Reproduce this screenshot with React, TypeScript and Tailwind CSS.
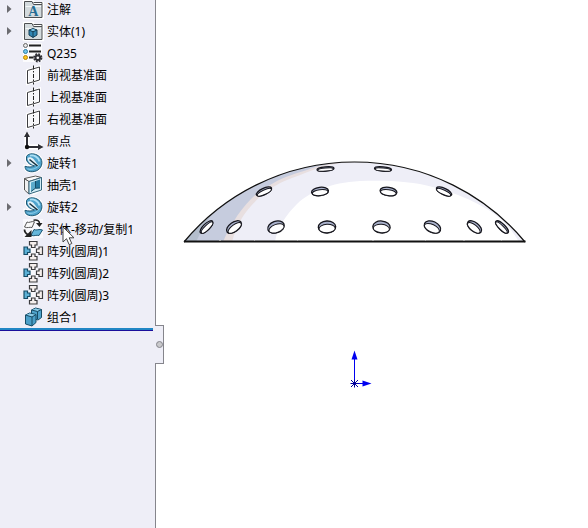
import type { ReactNode } from "react";

const INK = "#2f2f35";
const BLUE = "#4fa3cc";

function Icon({ children }: { children: ReactNode }) {
  return (
    <svg viewBox="0 0 22 22" className="size-[22px] shrink-0" fill="none" aria-hidden="true">
      {children}
    </svg>
  );
}

function FolderShape() {
  return (
    <>
      <path d="M2 3h9l1.500 2H21v15H2z" stroke="#fff" strokeWidth="2.500" />
      <path d="M2.500 19.500V3.500h7.500l1.500 3h8.500v13z" fill="#d3dadd" stroke="#4d4f52" />
      <path d="M11.500 4.500h8.500v2" stroke="#4d4f52" />
      <path d="M3.500 8.500h15.500" stroke="#f2f6f7" />
    </>
  );
}

function AnnotationIcon() {
  return (
    <Icon>
      <FolderShape />
      <text x="11.300" y="18" textAnchor="middle" fontSize="14" fontWeight="bold" fontFamily="Liberation Serif, serif" fill="#256d94">
        A
      </text>
    </Icon>
  );
}

function BodiesIcon() {
  return (
    <Icon>
      <FolderShape />
      <path d="M11 8.500l4 1.500v5l-4 2.500-4-2.500v-5z" fill="#2f86b3" stroke="#173e55" />
      <path d="M7 10l4 1.800 4-1.800M11 11.800v5.500" stroke="#173e55" />
      <path d="M8.500 10l2.500-.9 2.500.9-2.500 1z" fill="#8fd0ee" />
    </Icon>
  );
}

function MaterialIcon() {
  return (
    <Icon>
      <path d="M1 1h19v19H1z" fill="#fff" opacity=".75" />
      <path d="M7 3.500H19M7 9.500H19M7 15.500h4.500" stroke="#222" strokeWidth="2" />
      <circle cx="3.500" cy="3.500" r="2" fill="#e8e8e8" stroke="#666" />
      <circle cx="3.500" cy="9.500" r="2" fill="#6fc4ea" stroke="#2c7da3" />
      <circle cx="3.500" cy="15.500" r="2" fill="#ffc61a" stroke="#b8860b" />
      <circle cx="15.800" cy="15.800" r="3.600" stroke={INK} strokeWidth="2" strokeDasharray="1.700 1.130" />
      <circle cx="15.800" cy="15.800" r="2.300" stroke={INK} strokeWidth="2" />
    </Icon>
  );
}

function PlaneIcon() {
  return (
    <Icon>
      <path d="M5.500 6.500l12-3.500v13l-12 3.500z" fill="#f7f7fa" stroke="#fff" strokeWidth="3" />
      <path d="M5.500 6.500l12-3.500v13l-12 3.500z" stroke="#3b3b3f" />
      <path d="M11.500 1.500v19" stroke="#222" strokeDasharray="4 1.500 1.500 1.500" />
    </Icon>
  );
}

function OriginIcon() {
  return (
    <Icon>
      <path d="M5 3v14h15" stroke="#fff" strokeWidth="5" />
      <path d="M5 5v12h12" stroke={INK} strokeWidth="2" />
      <path d="M5 1.500l3 5.500h-6zM21.500 17l-5.500 3v-6z" fill={INK} />
      <circle cx="5" cy="17" r="2.200" fill="#111" />
    </Icon>
  );
}

function RevolveIcon() {
  const body =
    "M4.500 4.500C6 1.500 11 1 15 3 20 5.500 21.200 11 18.500 15.500 16 19.500 9 21.200 4.500 18.300 3.500 17.300 3 15.800 3 14.300 6 15.200 10 15.500 12.500 13.800 9 13 5.500 11.500 4.500 8z";
  return (
    <Icon>
      <path d={body} stroke="#fff" strokeWidth="3" />
      <path d={body} fill={BLUE} stroke="#1d5673" />
      <path d="M8 3.700c4-1 8.500 1.500 9.500 5.800" stroke="#a9def4" strokeWidth="1.800" />
      <path d="M5.500 16.800c4 1.300 9 0 12-4.300" stroke="#8bcbe6" strokeWidth="1.200" />
      <path d="M5.500 6c1.500-1.200 4-1 6 1l5 6.500-4-.2C9 12.500 6 10.500 5.500 6z" fill="#e4f2f9" />
      <path d="M7.500 7.500l8 6.500" stroke="#17333f" strokeWidth="1.600" />
    </Icon>
  );
}

function ShellIcon() {
  return (
    <Icon>
      <path d="M2.500 5l10-3 7 1.500V16l-8 4-9-4z" fill="#fff" stroke="#fff" strokeWidth="2" />
      <path d="M2.500 4.500l4.500 3v12.500l-4.500-4z" fill="#f0f0f0" stroke="#555" />
      <path d="M2.500 4.500l11-2.500 6 1.500-12.500 4z" fill="#fafafa" stroke="#555" />
      <path d="M7 7.500l12.500-4V16L7 20z" fill="#d2edf7" stroke="#35667e" />
      <path d="M9 8.500l4.500-1.500v7L9 17.500z" fill="#5baacb" />
      <path d="M13.500 7l4.500-1.500v8.500l-4.500.5z" fill="#2479a0" />
      <path d="M13.500 7v7.200L9 17.500M13.500 14.200l4.500-.2" stroke="#164e69" />
    </Icon>
  );
}

function MoveCopyIcon() {
  return (
    <Icon>
      <path d="M1 1h20v19H1z" fill="#fff" opacity=".6" />
      <path d="M5 4c2 1.500 4.500-1.300 7.500-.2L10 9.500c-2.500-.8-4.500 1-7.500-.5z" fill="#f7f7f7" stroke="#555" />
      <path d="M12 11.500c2.500 1.500 5-1 8.500.5l-3.500 5.500c-2.500-1-5 1.200-8-.3z" fill="#65b6da" stroke="#1d5673" />
      <path d="M11.500 2.200c4-.7 6 .8 6 3.300" stroke="#222" strokeWidth="1.600" />
      <path d="M14 5h6.500l-3 4z" fill="#222" />
      <path d="M2.500 11.500c0 2.500 1 4 4 5.500" stroke="#222" strokeWidth="1.800" />
      <path d="M2.500 19h7v-7z" fill="#222" />
    </Icon>
  );
}

function CircularPatternIcon() {
  const piece = "M7.500 1.500h7.500v3.500h-2v2.500h-3.500v-2.500h-2z";
  return (
    <Icon>
      <path d="M11.250 0v21M1 10.750h20.500" stroke="#fff" strokeWidth="7" opacity=".6" />
      {[0, 90, 180].map((deg) => (
        <path key={deg} d={piece} transform={`rotate(${deg} 11.250 10.750)`} fill="#f5efed" stroke="#3c3c3f" strokeWidth="1.200" />
      ))}
      <path d={piece} transform="rotate(270 11.250 10.750)" fill="#5cb1d6" stroke="#154b66" strokeWidth="1.200" />
    </Icon>
  );
}

function CombineIcon() {
  return (
    <Icon>
      <path d="M9.500 4l4-2 6 1.500v8l-3.500 2.500-6.500-2z" fill={BLUE} stroke="#174c66" strokeLinejoin="round" />
      <path d="M10 4l3.500-1.500 5.500 1.200-3.500 1.500z" fill="#8bcbe6" />
      <path d="M9.500 4l6 1.500 4-2M15.500 5.500V13" stroke="#174c66" />
      <path d="M3.500 9l4-2 6.500 1.500v8l-4 3.500-6.500-2z" fill="#4a9fc8" stroke="#174c66" strokeLinejoin="round" />
      <path d="M4 9l3.500-1.500 6 1.200-3.700 2z" fill="#8bcbe6" />
      <path d="M3.500 9l6.500 2 4-2.500M10 11v9" stroke="#174c66" />
    </Icon>
  );
}

type TreeNode = { label: string; icon: () => ReactNode; expandable?: boolean; hovered?: boolean };

const nodes: TreeNode[] = [
  { label: "注解", icon: AnnotationIcon, expandable: true },
  { label: "实体(1)", icon: BodiesIcon, expandable: true },
  { label: "Q235", icon: MaterialIcon },
  { label: "前视基准面", icon: PlaneIcon },
  { label: "上视基准面", icon: PlaneIcon },
  { label: "右视基准面", icon: PlaneIcon },
  { label: "原点", icon: OriginIcon },
  { label: "旋转1", icon: RevolveIcon, expandable: true },
  { label: "抽壳1", icon: ShellIcon },
  { label: "旋转2", icon: RevolveIcon, expandable: true },
  { label: "实体-移动/复制1", icon: MoveCopyIcon, hovered: true },
  { label: "阵列(圆周)1", icon: CircularPatternIcon },
  { label: "阵列(圆周)2", icon: CircularPatternIcon },
  { label: "阵列(圆周)3", icon: CircularPatternIcon },
  { label: "组合1", icon: CombineIcon },
];

function Cursor() {
  return (
    <svg viewBox="0 0 13 20" className="absolute left-4.5 top-1.5 z-10 h-5 w-[13px]" aria-hidden="true">
      <path d="M1 1v15l3.500-3.300 2.700 6 2.600-1.200-2.600-5.700H12z" fill="#fff" stroke="#444" />
    </svg>
  );
}

function TreeRow({ node }: { node: TreeNode }) {
  const NodeIcon = node.icon;
  return (
    <li className="flex h-[22px] items-center">
      <span className="flex w-[22px] shrink-0 pl-1.5">
        {node.expandable && (
          <button type="button" aria-label={`展开 ${node.label}`} className="p-px">
            <svg viewBox="0 0 5 8" className="h-2 w-[5px]" aria-hidden="true">
              <path d="M0 0l4.500 4L0 8z" fill="#6b6b70" />
            </svg>
          </button>
        )}
      </span>
      <NodeIcon />
      <span className="relative pl-[3px] pt-0.5 whitespace-nowrap">
        {node.label}
        {node.hovered && <Cursor />}
      </span>
    </li>
  );
}

// cx, cy, rx, ry, tilt
const holes = [
  [325.5, 169, 8.5, 2.2, -5],
  [383, 169, 8.5, 2.2, 5],
  [264, 191.5, 8.3, 3.2, -25],
  [320, 191.5, 8.5, 4.2, -7],
  [388.5, 191.5, 8.5, 4.2, 8],
  [444, 191.5, 8.3, 3.2, 25],
  [206.5, 227, 8.3, 3.3, -44],
  [234, 227, 8.5, 4.7, -36],
  [276, 227, 8.5, 5.8, -20],
  [327, 227, 8.7, 6, -3],
  [381.5, 227, 8.7, 6, 5],
  [432.5, 227, 8.7, 5.5, 25],
  [474.5, 227, 8.3, 4.5, 38],
  [502, 227, 8.3, 3, 44],
];

const DOME = "M184 242A221.700 221.700 0 0 1 525 242z";

function Dome() {
  return (
    <svg viewBox="179 156 350 90" className="h-[90px] w-[350px] shrink-0" role="img" aria-label="模型">
      <clipPath id="dome">
        <path d={DOME} />
      </clipPath>
      <g clipPath="url(#dome)">
        <path d={DOME} fill="#eeeef7" />
        <path d="M275 242C277 228 286 215 297 204 311 191 330 183 360 181 385 180 412 181 433 187 460 194 480 204 493 213 505 222 513 231 519 242z" fill="#fff" />
        <path d="M180 242V150H353V162C337 163 322 166 313 170 303 174 294 177 287 180 277 184 268 190 263 194 254 202 246 211 242 218 237 227 234 234 232 242z" fill="#e8dfe0" />
        <path d="M180 242V150H345V162C330 163 317 166 307 170 296 173 285 177 277 181 266 187 258 192 252 198 244 206 238 214 234 221 229 228 226 235 223 242z" fill="#c6ccde" />
        <path d="M180 242V205L232 190C218 205 205 222 196 242z" fill="#b4becd" />
      </g>
      {holes.map(([cx, cy, rx, ry, tilt]) => (
        <g key={`${cx}-${cy}`} transform={`rotate(${tilt} ${cx} ${cy})`} stroke="#15151c">
          <ellipse cx={cx} cy={cy} rx={rx} ry={ry} fill="#aab2cc" strokeWidth="1.300" />
          <ellipse cx={cx} cy={cy + ry * 0.26} rx={rx - 0.6} ry={ry * 0.7} fill="#fff" strokeWidth="1" />
        </g>
      ))}
      <path d="M184 242A221.700 221.700 0 0 1 525 242" fill="none" stroke="#111" strokeWidth="1.200" />
      <path d="M184 241.500H525.500" stroke="#111" strokeWidth="2" />
      <path d="M219 240.500h2M254 240.500h1M297 240.500h1M372 240.500h2M425 240.500h1M463 240.500h2M501 240.500h1" stroke="#aaa" />
    </svg>
  );
}

function Triad() {
  return (
    <svg viewBox="334 346 40 44" className="mt-25 h-11 w-10 shrink-0" aria-hidden="true">
      <path d="M354.500 383.500V358M354.500 383.500H363" stroke="#0000f0" />
      <path d="M354.500 350.500l3 9h-6zM371.500 383.500l-9 3v-6z" fill="#0000f0" />
      <path d="M351 380l7 7M358 380l-7 7M350.500 383.500h8M354.500 379.500v8" stroke="#00009a" />
    </svg>
  );
}

export default function App() {
  return (
    <div className="flex h-screen overflow-hidden bg-white text-xs text-black [font-family:'Noto_Sans','Noto_Sans_CJK_SC',sans-serif]">
      <aside className="relative w-[156px] shrink-0 border-r border-[#85858c] bg-[#eeeef7]">
        <ul className="-mt-0.5">
          {nodes.map((node) => (
            <TreeRow key={node.label} node={node} />
          ))}
        </ul>
        <div className="mr-0.5 h-[3px] border-b border-[#1a0f9c] bg-[#2186c4]" />
        <button
          type="button"
          aria-label="折叠面板"
          className="absolute left-full top-[325px] flex h-[39px] w-[9px] items-center justify-center border-y border-r border-[#85858c] bg-[#eeeef7]"
        >
          <span className="size-[7px] shrink-0 rounded-full border border-[#85858c] bg-[#c9c9cc]" />
        </button>
      </aside>
      <main className="flex flex-1 flex-col items-center pr-9 pt-39">
        <Dome />
        <Triad />
      </main>
    </div>
  );
}
